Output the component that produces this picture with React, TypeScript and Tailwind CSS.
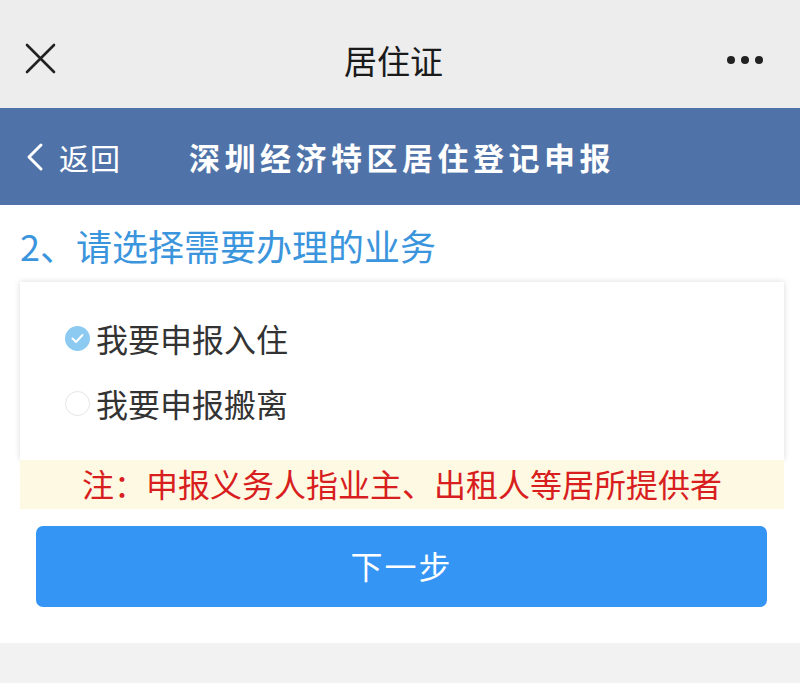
import React from "react";

const font = { fontFamily: '"Noto Sans CJK SC", "Noto Sans", sans-serif' };

export default function App() {
  return (
    <div className="w-[800px] h-[683px] bg-[#f2f2f2] flex flex-col" style={font}>
      {/* top bar */}
      <div className="h-[108px] bg-[#ededed] flex items-center justify-between px-[25px] pt-[12px] shrink-0">
        <svg width="31" height="31" viewBox="0 0 31 31" className="-mt-[3px]">
          <path d="M2 2 L29 29 M29 2 L2 29" stroke="#222" strokeWidth="2.6" strokeLinecap="round" />
        </svg>
        <div className="text-[33px] text-[#1a1a1a] leading-none ml-[4px]">居住证</div>
        <div className="flex gap-[6px] mr-[12px] items-center">
          <span className="w-[8px] h-[8px] rounded-full bg-[#222]" />
          <span className="w-[8px] h-[8px] rounded-full bg-[#222]" />
          <span className="w-[8px] h-[8px] rounded-full bg-[#222]" />
        </div>
      </div>
      {/* blue header */}
      <div className="h-[97px] bg-[#4f73a8] flex items-center px-[25px] shrink-0">
        <div className="flex items-center gap-[14px] text-white">
          <svg width="20" height="30" viewBox="0 0 20 30">
            <path d="M16 3 L4 15 L16 27" stroke="white" strokeWidth="3" fill="none" strokeLinecap="round" strokeLinejoin="round" />
          </svg>
          <span className="text-[30px] leading-none tracking-[1px]">返回</span>
        </div>
        <div className="ml-[68px] text-white font-bold text-[31px] tracking-[4.5px] leading-none">深圳经济特区居住登记申报</div>
      </div>
      {/* content */}
      <div className="bg-white h-[438px] shrink-0 flex flex-col">
        <div className="pl-[20px] pt-[22px] text-[36px] text-[#3b95dd] leading-none">2、请选择需要办理的业务</div>
        <div className="ml-[20px] mr-[16px] mt-[19px] h-[178px] bg-white shadow-[0_0_6px_rgba(0,0,0,0.15)] flex flex-col pl-[45px] pt-[40px] gap-[33px]">
          <div className="flex items-center">
            <span className="w-[25px] h-[25px] rounded-full bg-[#8ccaf2] flex items-center justify-center">
              <svg width="15" height="15" viewBox="0 0 15 15">
                <path d="M2.5 7.5 L6 11 L12.5 4" stroke="white" strokeWidth="2" fill="none" strokeLinecap="round" strokeLinejoin="round" />
              </svg>
            </span>
            <span className="ml-[6px] text-[32px] leading-none text-[#333]">我要申报入住</span>
          </div>
          <div className="flex items-center">
            <span className="w-[25px] h-[25px] rounded-full border border-[#e6e6e6] bg-white" />
            <span className="ml-[6px] text-[32px] leading-none text-[#333]">我要申报搬离</span>
          </div>
        </div>
        <div className="ml-[20px] mr-[16px] h-[49px] bg-[#fdf9e3] flex items-center justify-center">
          <span className="text-[32px] leading-none text-[#d81e1e] -mt-[3px]">注：申报义务人指业主、出租人等居所提供者</span>
        </div>
        <div className="ml-[36px] mr-[33px] mt-[17px] h-[81px] bg-[#3595f5] rounded-[7px] flex items-center justify-center">
          <span className="text-white text-[32px] leading-none tracking-[2px] -mt-[3px]">下一步</span>
        </div>
      </div>
    </div>
  );
}
